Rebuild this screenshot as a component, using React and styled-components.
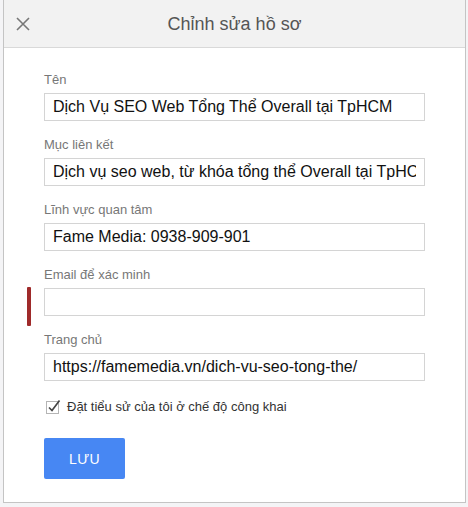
import React from 'react';
import styled, { createGlobalStyle } from 'styled-components';

const GlobalStyle = createGlobalStyle`
  html, body {
    margin: 0;
    padding: 0;
    background: #f4f4f6;
    font-family: 'Liberation Sans', Arial, sans-serif;
  }
`;

const Page = styled.div`
  width: 468px;
  height: 507px;
  overflow: hidden;
  padding-left: 3px;
  box-sizing: border-box;
`;

const Dialog = styled.div`
  width: 463px;
  height: 503px;
  box-sizing: border-box;
  background: #fff;
  border: 1px solid #c4c4c4;
  border-top: none;
  display: flex;
  flex-direction: column;
`;

const Header = styled.div`
  height: 48px;
  box-sizing: border-box;
  background: #f2f2f2;
  border-bottom: 1px solid #d9d9d9;
  display: grid;
  grid-template-columns: 40px 1fr 40px;
  align-items: center;
`;

const CloseButton = styled.button`
  border: none;
  background: none;
  padding: 0;
  margin-left: 12px;
  width: 14px;
  height: 14px;
  display: flex;
  cursor: pointer;
`;

const Title = styled.h1`
  margin: 0;
  text-align: center;
  font-size: 18px;
  font-weight: normal;
  color: #555;
  padding-top: 1px;
`;

const Body = styled.form`
  padding: 24px 40px 0 40px;
  display: flex;
  flex-direction: column;
`;

const Field = styled.div`
  position: relative;
  display: flex;
  flex-direction: column;
  gap: 5px;
  margin-bottom: 16px;
`;

const Label = styled.label`
  font-size: 13px;
  line-height: 16px;
  color: #777;
`;

const Input = styled.input`
  width: 381px;
  height: 28px;
  box-sizing: border-box;
  border: 1px solid #d4d4d4;
  border-radius: 0;
  padding: 0 8px;
  font-family: 'Liberation Sans', Arial, sans-serif;
  font-size: 16px;
  color: #111;
  background: #fff;
  outline: none;
`;

const ErrorMark = styled.span`
  position: absolute;
  left: -17px;
  top: 20px;
  width: 4px;
  height: 39px;
  border-radius: 1px;
  background: #9f2a2a;
`;

const CheckRow = styled.label`
  display: flex;
  align-items: center;
  gap: 5px;
  margin-top: 1px;
  padding-left: 2px;
  height: 16px;
  font-size: 13px;
  color: #333;
`;

const SaveButton = styled.button`
  margin-top: 24px;
  width: 81px;
  height: 41px;
  border: none;
  border-radius: 2px;
  background: #4787f3;
  color: #fff;
  font-family: 'Liberation Sans', Arial, sans-serif;
  font-size: 14px;
  letter-spacing: 0.3px;
  cursor: pointer;
`;

const fields = [
  { label: 'Tên', value: 'Dịch Vụ SEO Web Tổng Thể Overall tại TpHCM' },
  { label: 'Mục liên kết', value: 'Dịch vụ seo web, từ khóa tổng thể Overall tại TpHCM' },
  { label: 'Lĩnh vực quan tâm', value: 'Fame Media: 0938-909-901' },
  { label: 'Email để xác minh', value: '', error: true },
  { label: 'Trang chủ', value: 'https://famemedia.vn/dich-vu-seo-tong-the/' },
];

export default function App() {
  return (
    <Page>
      <GlobalStyle />
      <Dialog>
        <Header>
          <CloseButton type="button" aria-label="Đóng">
            <svg width="14" height="14" viewBox="0 0 14 14">
              <path d="M1 1 L13 13 M13 1 L1 13" stroke="#777" strokeWidth="1.6" fill="none" />
            </svg>
          </CloseButton>
          <Title>Chỉnh sửa hồ sơ</Title>
        </Header>
        <Body onSubmit={(e) => e.preventDefault()}>
          {fields.map((f, i) => (
            <Field key={i}>
              {f.error && <ErrorMark />}
              <Label>{f.label}</Label>
              <Input defaultValue={f.value} />
            </Field>
          ))}
          <CheckRow>
            <svg width="16" height="15" viewBox="0 0 16 15">
              <rect x="0.5" y="2.5" width="12" height="12" fill="#fff" stroke="#b5b5b5" />
              <path d="M3 8.5 L6 11.5 L13.5 1.5" stroke="#444" strokeWidth="1.7" fill="none" />
            </svg>
            Đặt tiểu sử của tôi ở chế độ công khai
          </CheckRow>
          <SaveButton type="submit">LƯU</SaveButton>
        </Body>
      </Dialog>
    </Page>
  );
}
